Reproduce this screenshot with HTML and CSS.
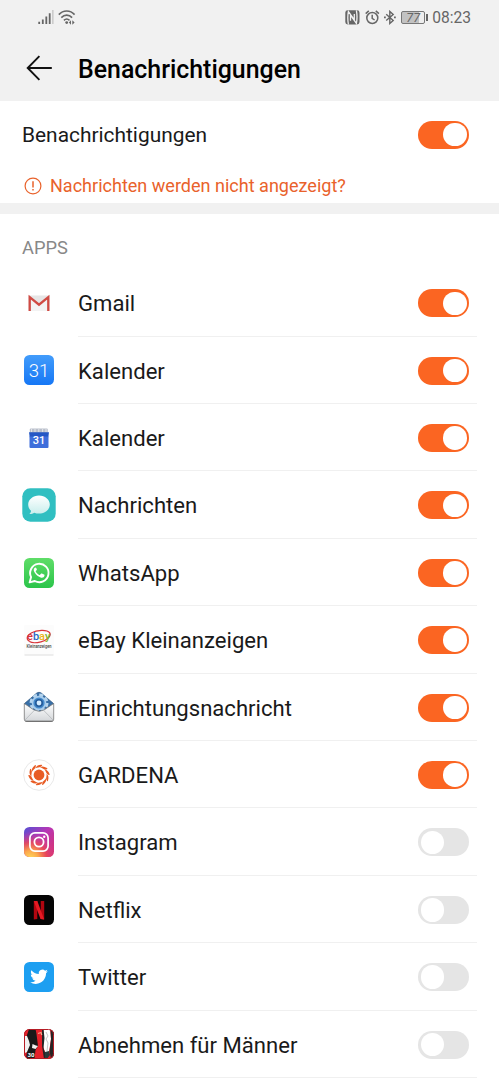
FILE: index.html
```html
<!DOCTYPE html>
<html lang="de">
<head>
    <meta charset="UTF-8">
    <meta name="viewport" content="width=device-width, initial-scale=1.0">
    <title>Benachrichtigungen</title>
    <link rel="stylesheet" href="styles.css">
</head>
<body>
    <header class="header">
        <div class="status-bar">
            <div class="status-left">
                <svg width="16" height="15" viewBox="0 0 16 15">
                    <path d="M1.2 11.8v2.2M4.8 9.4V14M8.3 6.4V14M11.7 3.2V14" stroke="#666" stroke-width="1.8"/>
                    <path d="M14.8 0v14" stroke="#ccc" stroke-width="1.6"/>
                </svg>
                <svg width="18" height="15" viewBox="0 0 18 15" fill="none" stroke="#666" stroke-width="1.6">
                    <path d="M.8 4.6C5.2-.2 12.2-.2 16.6 4.6M3.3 7.6c3.2-3.3 7.6-3.3 10.8 0M5.9 10.3c1.8-1.7 3.8-1.7 5.6 0"/>
                    <circle cx="8.7" cy="12.6" r="1.4" fill="#666" stroke="none"/>
                    <path d="M13 10.2v4.6l-2.1-2.3zM14.3 10.2v4.6l2.3-2.3z" fill="#666" stroke="none"/>
                </svg>
            </div>
            <div class="status-right">
                <svg class="nfc" width="15" height="15" viewBox="0 0 15 15">
                    <rect x=".3" y=".3" width="14.2" height="14.2" rx="2.4" fill="#666"/>
                    <path d="M3.4 14.5C2.6 10 2.6 5.5 3.4 1.5L9.3 9.8V4M11.4.3c.8 4.5.8 9 0 13L5.5 5v5.8" fill="none" stroke="#f1f1f1" stroke-width="1.3"/>
                </svg>
                <svg class="alarm" width="15" height="15" viewBox="0 0 15 15" fill="none" stroke="#666" stroke-width="1.5">
                    <circle cx="7.3" cy="8" r="5.5"/>
                    <path d="M7.2 4.8v3.6l2.4 1.6M.7 3.6L3.8.9M10.8.9l3.1 2.7"/>
                </svg>
                <svg class="bluetooth" width="12" height="15" viewBox="0 0 12 15" fill="none" stroke="#666" stroke-width="1.4">
                    <path d="M2.2 4.2l7 6.2-3.4 3V1.4l3.4 3-7 6.2"/>
                    <path d="M0 7.4h1.8M10 7.4h1.8" stroke-width="1.6"/>
                </svg>
                <span class="battery"><span class="battery-text">77</span></span>
                <span class="clock">08:23</span>
            </div>
        </div>
        <div class="title-bar">
            <svg class="back" width="26" height="26" viewBox="0 0 26 26" fill="none" stroke="#111" stroke-width="1.9">
                <path d="M13.4 1.2L1.7 13l11.7 11.8M1.8 13h24"/>
            </svg>
            <h1>Benachrichtigungen</h1>
        </div>
    </header>

    <section class="main-setting">
        <div class="main-row">
            <span class="main-label">Benachrichtigungen</span>
            <span class="toggle on"></span>
        </div>
        <div class="hint">
            <svg width="18" height="18" viewBox="0 0 18 18" fill="none" stroke="#e9622b" stroke-width="1.2">
                <circle cx="9" cy="9" r="7.9"/>
                <path d="M9 4.3v6.2M9 12v1.6" stroke-width="1.5"/>
            </svg>
            <span>Nachrichten werden nicht angezeigt?</span>
        </div>
    </section>

    <section class="apps">
        <h2>APPS</h2>
        <ul class="app-list">
            <li class="app">
                <svg class="icon" viewBox="0 0 34 34">
                    <rect x="6.5" y="9.5" width="21" height="15.5" rx="1" fill="#e6e6e6"/>
                    <path d="M9 12l8 6.5 8-6.5v13H9z" fill="#f3f3f3"/>
                    <path d="M7.7 25V11.2l9.3 7.5 9.3-7.5V25" fill="none" stroke="#d04a43" stroke-width="2.3"/>
                </svg>
                <div class="app-body"><span>Gmail</span><span class="toggle on"></span></div>
            </li>
            <li class="app">
                <svg class="icon" viewBox="0 0 34 34">
                    <defs>
                        <linearGradient id="calendarBlue" x1="0" y1="0" x2="0" y2="1">
                            <stop offset="0" stop-color="#429cfb"/><stop offset="1" stop-color="#1677f5"/>
                        </linearGradient>
                    </defs>
                    <rect x="2" y="2" width="30" height="30" rx="5.5" fill="url(#calendarBlue)"/>
                    <text class="day-light" x="17" y="23.5">31</text>
                </svg>
                <div class="app-body"><span>Kalender</span><span class="toggle on"></span></div>
            </li>
            <li class="app">
                <svg class="icon" viewBox="0 0 34 34">
                    <rect x="7.8" y="7.5" width="18" height="5" rx="1" fill="#b9bfcb"/>
                    <path d="M9.5 8v3M13 8v3M16.8 8v3M20.6 8v3M24 8v3" stroke="#e3e5e9" stroke-width="1"/>
                    <path d="M7 11.3h20l-.7 5H7.7z" fill="#2457c5"/>
                    <path d="M7.5 15.5h19V26q0 1-1 1h-17q-1 0-1-1z" fill="#3e6edb"/>
                    <text class="day-bold" x="17" y="22.7">31</text>
                </svg>
                <div class="app-body"><span>Kalender</span><span class="toggle on"></span></div>
            </li>
            <li class="app">
                <svg class="icon" viewBox="0 0 34 34">
                    <defs>
                        <linearGradient id="bubble" x1="0" y1="0" x2="0" y2="1">
                            <stop offset="0" stop-color="#fff"/><stop offset="1" stop-color="#c8eeec"/>
                        </linearGradient>
                    </defs>
                    <rect x=".3" y=".3" width="33.4" height="33.4" rx="8" fill="#30bfc1"/>
                    <path d="M17 7.6c6 0 10.8 4 10.8 9s-4.8 9-10.8 9c-1.7 0-3.3-.3-4.7-.9-1.3.9-3.1 1.5-4.9 1.4 1-.9 1.5-1.9 1.6-3.3C7.2 21.2 6.2 19 6.2 16.600c0-5 4.8-9 10.8-9z" fill="url(#bubble)"/>
                </svg>
                <div class="app-body"><span>Nachrichten</span><span class="toggle on"></span></div>
            </li>
            <li class="app">
                <svg class="icon" viewBox="0 0 34 34">
                    <defs>
                        <linearGradient id="waGreen" x1="0" y1="0" x2="0" y2="1">
                            <stop offset="0" stop-color="#5fdd68"/><stop offset="1" stop-color="#2bc44a"/>
                        </linearGradient>
                    </defs>
                    <rect x="2" y="2" width="30" height="30" rx="5.5" fill="url(#waGreen)"/>
                    <path d="M7.6 26.4l1.5-5.3a9.2 9.2 0 1 1 3.7 3.900z" fill="none" stroke="#fff" stroke-width="1.9" stroke-linejoin="round"/>
                    <path d="M14.3 12.2c-.4-.8-.9-.8-1.4-.5-1.4 1-1.5 2.7-.4 4.5 1.5 2.5 3.4 4.2 6.1 5.2 2 .7 3.6-.2 3.9-2 .1-.5 0-.7-.5-.9l-2.1-1c-.4-.2-.7-.1-1 .3l-.8 1c-.3.3-.5.3-.9.1-1.5-.7-2.6-1.7-3.4-3.1-.2-.3-.1-.6.1-.9l.8-1c.2-.3.2-.5.1-.8z" fill="#fff"/>
                </svg>
                <div class="app-body"><span>WhatsApp</span><span class="toggle on"></span></div>
            </li>
            <li class="app">
                <svg class="icon" viewBox="0 0 34 34">
                    <rect x="2" y="2" width="30" height="30" rx="1" fill="#fcfcfc"/>
                    <path d="M2.5 32h29" stroke="#d5d5d5" stroke-width=".8"/>
                    <path d="M8 18.5c-4-1.8-3.8-5.8 1.2-8.6 5.8-3.2 16-3.6 18.4-.2 2 3-1.8 7.3-8.6 9.1-4 1-9.5 1.1-11.5-.3" fill="none" stroke="#d9363a" stroke-width="1.2"/>
                    <text class="ebay" transform="translate(5 16.6) scale(1.1 1)"><tspan fill="#d8333a">e</tspan><tspan fill="#2869c5">b</tspan><tspan fill="#eeb51b">a</tspan><tspan fill="#83b42a">y</tspan></text>
                    <text class="ebay-sub" x="17" y="25.3" textLength="25" lengthAdjust="spacingAndGlyphs">Kleinanzeigen</text>
                </svg>
                <div class="app-body"><span>eBay Kleinanzeigen</span><span class="toggle on"></span></div>
            </li>
            <li class="app">
                <svg class="icon" viewBox="0 0 34 34">
                    <defs>
                        <linearGradient id="paper" x1="0" y1="0" x2="0" y2="1">
                            <stop offset="0" stop-color="#fff"/><stop offset="1" stop-color="#d3d6d9"/>
                        </linearGradient>
                    </defs>
                    <path d="M2.5 13.5L14.8 3q2.2-1.5 4.4 0l12.3 10.5L27 22H7z" fill="#3970a8" stroke="#28527d" stroke-width=".7"/>
                    <circle cx="17" cy="13" r="8" fill="none" stroke="#b5d5ef" stroke-width="3" stroke-dasharray="4 2.28"/>
                    <circle cx="17" cy="13" r="7.3" fill="#a9cdec"/>
                    <circle cx="17" cy="13" r="5.6" fill="#4389cb"/>
                    <circle cx="17" cy="13" r="4" fill="#235b9b"/>
                    <circle cx="17" cy="13" r="2.4" fill="#d5edff"/>
                    <path d="M2.3 13.5l9.7 6.5q5 2.5 10 0l9.700-6.500v15.700q0 2.300-2.300 2.300H4.600q-2.300 0-2.300-2.300z" fill="url(#paper)" stroke="#777" stroke-width=".8"/>
                    <path d="M3 30l9.300-9.600M31 30l-9.300-9.600" stroke="#b4b8bb" stroke-width=".8"/>
                    <path d="M3.500 31.200h27" stroke="#666" stroke-width="1"/>
                </svg>
                <div class="app-body"><span>Einrichtungsnachricht</span><span class="toggle on"></span></div>
            </li>
            <li class="app">
                <svg class="icon" viewBox="0 0 34 34">
                    <defs>
                        <path id="petal" d="M13.400 10.300q.8-3.300 6-3.600 1.400 0 .5 1-1.400 1.900-3.700 1.800-1.600 0-2.800.8z"/>
                    </defs>
                    <circle cx="17" cy="17" r="15.300" fill="#fff" stroke="#e5e5e5" stroke-width=".9"/>
                    <circle cx="17" cy="17" r="5.400" fill="#e85c24"/>
                    <g fill="#e85c24">
                        <use href="#petal"/>
                        <use href="#petal" transform="rotate(36 17 17)"/>
                        <use href="#petal" transform="rotate(72 17 17)"/>
                        <use href="#petal" transform="rotate(108 17 17)"/>
                        <use href="#petal" transform="rotate(144 17 17)"/>
                        <use href="#petal" transform="rotate(180 17 17)"/>
                        <use href="#petal" transform="rotate(216 17 17)"/>
                        <use href="#petal" transform="rotate(252 17 17)"/>
                        <use href="#petal" transform="rotate(288 17 17)"/>
                        <use href="#petal" transform="rotate(324 17 17)"/>
                    </g>
                </svg>
                <div class="app-body"><span>GARDENA</span><span class="toggle on"></span></div>
            </li>
            <li class="app">
                <svg class="icon" viewBox="0 0 34 34">
                    <defs>
                        <linearGradient id="instaBase" x1="0" y1="0" x2="1" y2="1">
                            <stop offset="0" stop-color="#5450d4"/><stop offset=".45" stop-color="#b936b4"/><stop offset="1" stop-color="#dc3262"/>
                        </linearGradient>
                        <radialGradient id="instaGlow" cx=".22" cy="1.05" r=".9">
                            <stop offset="0" stop-color="#ffda5c"/><stop offset=".3" stop-color="#fba64b"/><stop offset=".6" stop-color="#ee4a51" stop-opacity=".8"/><stop offset="1" stop-color="#c837ab" stop-opacity="0"/>
                        </radialGradient>
                    </defs>
                    <rect x="2" y="2" width="30" height="30" rx="5.5" fill="url(#instaBase)"/>
                    <rect x="2" y="2" width="30" height="30" rx="5.5" fill="url(#instaGlow)"/>
                    <rect x="7.9" y="7.9" width="18.2" height="18.2" rx="5" fill="none" stroke="#fff" stroke-width="1.7"/>
                    <circle cx="17" cy="17" r="4.6" fill="none" stroke="#fff" stroke-width="1.8"/>
                    <circle cx="22.2" cy="11.8" r="1.2" fill="#fff"/>
                </svg>
                <div class="app-body"><span>Instagram</span><span class="toggle"></span></div>
            </li>
            <li class="app">
                <svg class="icon" viewBox="0 0 34 34">
                    <rect x="2" y="2" width="30" height="30" rx="5.5" fill="#050505"/>
                    <path d="M11.8 8h3.5v18l-3.5.4zM18.7 8h3.5v18.4l-3.5-.4z" fill="#b20610"/>
                    <path d="M11.8 8h3.5l6.9 18.4-3.7-.4z" fill="#e51a23"/>
                </svg>
                <div class="app-body"><span>Netflix</span><span class="toggle"></span></div>
            </li>
            <li class="app">
                <svg class="icon" viewBox="0 0 34 34">
                    <rect x="2" y="2" width="30" height="30" rx="5.5" fill="#1d9ff1"/>
                    <g transform="translate(8.2 7.9) scale(.735)">
                        <path fill="#fff" d="M23.95 4.57a10 10 0 0 1-2.82.77 4.96 4.96 0 0 0 2.16-2.72c-.95.55-2 .95-3.13 1.18a4.92 4.92 0 0 0-8.38 4.48C7.69 8.09 4.07 6.13 1.64 3.16a4.82 4.82 0 0 0-.67 2.48c0 1.71.87 3.21 2.19 4.1a4.9 4.9 0 0 1-2.23-.62v.06a4.92 4.92 0 0 0 3.95 4.83 5 5 0 0 1-2.21.08 4.94 4.94 0 0 0 4.6 3.42A9.87 9.87 0 0 1 0 19.54a13.99 13.99 0 0 0 7.55 2.21c9.05 0 14-7.5 14-13.98l-.02-.64a9.94 9.94 0 0 0 2.42-2.56z"/>
                    </g>
                </svg>
                <div class="app-body"><span>Twitter</span><span class="toggle"></span></div>
            </li>
            <li class="app">
                <svg class="icon" viewBox="0 0 34 34">
                    <defs>
                        <clipPath id="fitClip"><rect x="2" y="2" width="30" height="30" rx="5.5"/></clipPath>
                    </defs>
                    <g clip-path="url(#fitClip)">
                        <rect x="2" y="2" width="30" height="30" fill="#e5202a"/>
                        <path d="M7 2h6.5l1 5L16 19l-2.500 4-1 9H4l1-8 1-7-2-6z" fill="#191919"/>
                        <path d="M5 9l2 5 1 4-3 7-2 1V9zM10.500 17l3.500 1.500 2 .5-2.500 3-3.500-1z" fill="#f1f1f1"/>
                        <path d="M21.500 2H28l1 10-2 13-3 3-3-9z" fill="#fff"/>
                        <path d="M20 2h1.500l1 9-1 10 2.500 8-2 3-2-13zM28.500 2l.5 10-1.500 12 1.500 8h3V2z" fill="#242424"/>
                        <path d="M24 5l2 4-2 3 2 4-1 8" fill="none" stroke="#aaa" stroke-width=".7"/>
                        <path d="M23 25l4-1 1 4-3 4h-2z" fill="#29383b"/>
                        <path d="M16 6.500l3-1 .8 2.500" fill="none" stroke="#f2aa8c" stroke-width="1.200"/>
                        <text class="fit-number" x="5.5" y="29.5">30</text>
                    </g>
                    <rect x="2.5" y="2.5" width="29" height="29" rx="5" fill="none" stroke="#b51c25" stroke-width="1"/>
                </svg>
                <div class="app-body"><span>Abnehmen für Männer</span><span class="toggle"></span></div>
            </li>
        </ul>
    </section>
</body>
</html>
```

FILE: styles.css
```css
* {
    box-sizing: border-box;
}

body {
    margin: 0;
    height: 1080px;
    overflow: hidden;
    background-color: #fff;
    color: #1a1a1a;
    font-family: Roboto, sans-serif;
}

h1, h2, ul {
    margin: 0;
    padding: 0;
}

svg {
    display: block;
    flex-shrink: 0;
}

/* Header */
.header {
    height: 101px;
    background-color: #f1f1f1;
}

.status-bar {
    display: flex;
    justify-content: space-between;
    height: 35px;
    padding: 0 28px 0 38px;
    align-items: center;
    color: #666;
}

.status-left, .status-right {
    display: flex;
    align-items: center;
}

.status-left {
    gap: 4px;
}

.alarm {
    margin-left: 5px;
}

.bluetooth {
    margin-left: 4px;
}

.battery {
    position: relative;
    display: flex;
    align-items: center;
    justify-content: center;
    width: 24px;
    height: 13px;
    margin-left: 5px;
    border: 1px solid #777;
    border-radius: 2px;
    background: linear-gradient(to right, #c2c2c2 77%, #eee 77%);
}

.battery::after {
    content: "";
    position: absolute;
    right: -4px;
    top: 2px;
    width: 2px;
    height: 7px;
    background-color: #666;
}

.battery-text {
    font-size: 12.5px;
    font-style: italic;
    line-height: 12px;
}

.clock {
    margin-left: 7px;
    padding-top: 1px;
    font-size: 15.6px;
}

.title-bar {
    display: flex;
    align-items: center;
    height: 66px;
    padding-left: 26px;
}

h1 {
    margin-left: 26px;
    padding-top: 2px;
    font-size: 24.9px;
    font-weight: 500;
    color: #000;
}

/* Main switch */
.main-setting {
    height: 113px;
    border-bottom: 11px solid #f1f1f1;
}

.main-row {
    display: flex;
    justify-content: space-between;
    align-items: center;
    height: 67px;
    padding: 0 30px 0 22px;
}

.main-label {
    padding-top: 1px;
    font-size: 20.9px;
}

.hint {
    display: flex;
    align-items: center;
    gap: 8px;
    height: 35px;
    padding-left: 24px;
    font-size: 18.05px;
    color: #e9622b;
}

.toggle {
    display: flex;
    align-items: center;
    flex-shrink: 0;
    width: 51px;
    height: 28px;
    padding: 0 2.5px;
    border-radius: 14px;
    background-color: #e5e5e5;
}

.toggle::before {
    content: "";
    width: 23.5px;
    height: 23.5px;
    border-radius: 50%;
    background-color: #fff;
}

.toggle.on {
    justify-content: flex-end;
    background-color: #fb6522;
}

/* App list */
h2 {
    height: 55.3px;
    padding: 0 22px;
    font-size: 18.3px;
    font-weight: 400;
    line-height: 67px;
    color: #888;
}

.app-list {
    list-style: none;
}

.app {
    display: flex;
    align-items: center;
    height: 67.4px;
    padding: 0 22px;
}

.icon {
    width: 34px;
    height: 34px;
}

.app-body {
    display: flex;
    flex: 1;
    align-items: center;
    justify-content: space-between;
    height: 100%;
    margin-left: 22px;
    padding: 1.6px 8px 0 0;
    border-bottom: 1px solid #f0f0f0;
    font-size: 22.1px;
}

.day-light {
    font-size: 18.5px;
    font-weight: 300;
    text-anchor: middle;
    fill: #fff;
}

.day-bold {
    font-size: 11px;
    font-weight: 500;
    text-anchor: middle;
    fill: #fff;
}

.ebay {
    font-size: 10px;
    font-weight: 500;
}

.ebay-sub {
    font-size: 4.5px;
    font-weight: 500;
    text-anchor: middle;
    fill: #444;
}

.fit-number {
    font-size: 6px;
    font-weight: 700;
    fill: #fff;
}
```
